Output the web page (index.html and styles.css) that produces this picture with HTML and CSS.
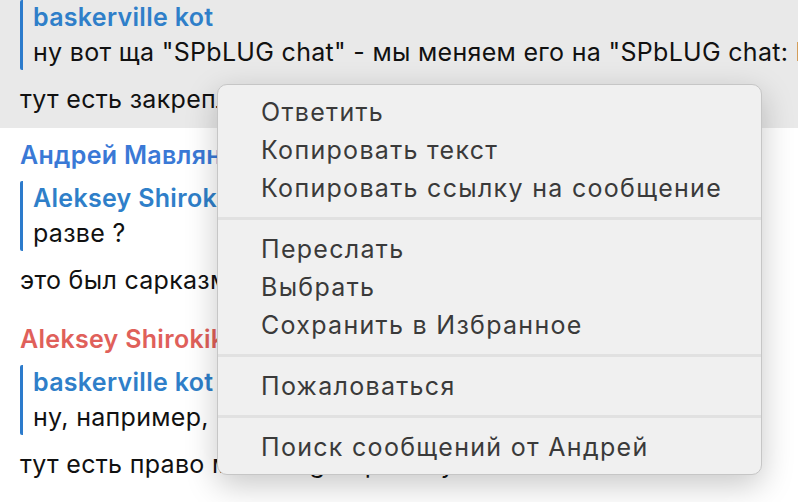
FILE: index.html
```html
<!DOCTYPE html>
<html>
<head>
<meta charset="utf-8">
<title>SPbLUG chat</title>
<link rel="stylesheet" href="styles.css">
</head>
<body>

<div class="chat">
    <div class="msg msg-selected">
        <div class="quote quote-first">
            <div class="quote-author">baskerville kot</div>
            <div class="quote-text">ну вот ща "SPbLUG chat" - мы меняем его на "SPbLUG chat: Information"</div>
        </div>
        <div class="msg-text">тут есть закреплённое сообщение про название</div>
    </div>

    <div class="msg">
        <div class="author author-blue">Андрей Мавлянов</div>
        <div class="quote">
            <div class="quote-author">Aleksey Shirokikh</div>
            <div class="quote-text">разве ?</div>
        </div>
        <div class="msg-text">это был сарказм</div>
    </div>

    <div class="msg">
        <div class="author author-red">Aleksey Shirokikh</div>
        <div class="quote">
            <div class="quote-author">baskerville kot</div>
            <div class="quote-text">ну, например, чтобы поменять название</div>
        </div>
        <div class="msg-text">тут есть право менять group info у всех</div>
    </div>
</div>

<div class="context-menu">
    <div class="menu-item">Ответить</div>
    <div class="menu-item">Копировать текст</div>
    <div class="menu-item">Копировать ссылку на сообщение</div>
    <div class="menu-sep"></div>
    <div class="menu-item">Переслать</div>
    <div class="menu-item">Выбрать</div>
    <div class="menu-item">Сохранить в Избранное</div>
    <div class="menu-sep"></div>
    <div class="menu-item">Пожаловаться</div>
    <div class="menu-sep"></div>
    <div class="menu-item">Поиск сообщений от Андрей</div>
</div>

</body>
</html>
```
FILE: styles.css
```css
html, body{
    margin:0;
    padding:0;
}

body{
    width:798px;
    height:502px;
    overflow:hidden;
    position:relative;
    background-color:white;
    font-family:Inter, "Noto Sans", sans-serif;
    font-size:25px;
    letter-spacing:0.3px;
    color:#111;
}

.chat{
    white-space:nowrap;
    overflow:hidden;
}

.msg{
    padding:10px 20px 14px 20px;
}

.msg-selected{
    background-color:#e9e9e9;
    padding-top:0;
    padding-bottom:11px;
}

.author{
    font-weight:600;
    letter-spacing:0.3px;
    line-height:35px;
}

.author-blue{
    color:#3a79d6;
}

.author-red{
    color:#e0605a;
}

.quote{
    border-left:3px solid #2c7bcc;
    border-radius:2px;
    padding-left:10px;
    margin-top:8px;
    line-height:35px;
}

.quote-first{
    margin-top:0;
}

.quote-author{
    color:#2f7fc9;
    font-weight:600;
    letter-spacing:0.3px;
}

.msg-text{
    line-height:35px;
    margin-top:12px;
}

/* context menu lies over the messages */
.context-menu{
    position:absolute;
    left:217px;
    top:84px;
    width:543px;
    padding:8px 0 8px 0;
    background-color:#f0f0f0;
    border:1px solid #c6c6c6;
    border-radius:10px;
    box-shadow:0 10px 32px rgba(0,0,0,0.22);
    color:#3a3a3a;
    font-size:25px;
    letter-spacing:1.3px;
}

.menu-item{
    line-height:38px;
    padding-left:43px;
}

.menu-sep{
    height:3px;
    background-color:#e1e1e1;
    margin:10px 0;
}
```
